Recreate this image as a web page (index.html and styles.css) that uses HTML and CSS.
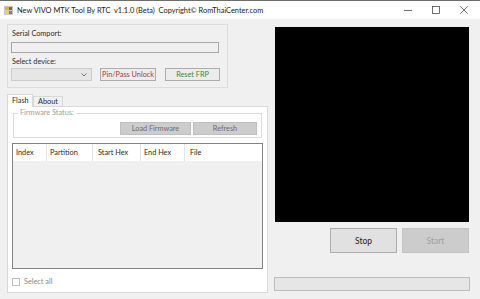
FILE: index.html
```html
<!DOCTYPE html>
<html lang="en">
<head>
    <meta charset="UTF-8">
    <title>New VIVO MTK Tool By RTC</title>
    <link rel="stylesheet" href="styles.css">
</head>
<body>
    <div class="window">
        <div class="titlebar">
            <svg class="app-icon" width="9" height="9" viewBox="0 0 9 9">
                <rect x="0" y="0" width="9" height="9" fill="#c8c8c8"/>
                <rect x="1" y="1" width="4" height="3" fill="#e8b030"/>
                <rect x="5" y="1" width="3" height="3" fill="#d04030"/>
                <rect x="1" y="5" width="4" height="3" fill="#f0d060"/>
                <rect x="5" y="5" width="3" height="3" fill="#7a7a9a"/>
            </svg>
            <span class="title">New VIVO MTK Tool By RTC&nbsp; v1.1.0 (Beta)&nbsp; Copyright© RomThaiCenter.com</span>
            <div class="controls">
                <svg viewBox="0 0 8 8"><path d="M0 4.5H8" stroke="#333" stroke-width="0.7"/></svg>
                <svg viewBox="0 0 8 8"><rect x="0.5" y="0.5" width="7" height="7" fill="none" stroke="#333" stroke-width="0.7"/></svg>
                <svg viewBox="0 0 8 8"><path d="M0.3 0.3L7.7 7.7M7.7 0.3L0.3 7.7" stroke="#333" stroke-width="0.7"/></svg>
            </div>
        </div>

        <div class="content">
            <div class="left">
                <div class="group-box">
                    <div class="label">Serial Comport:</div>
                    <div class="textbox"></div>
                    <div class="label label-device">Select device:</div>
                    <div class="device-row">
                        <div class="combo">
                            <svg width="6" height="4" viewBox="0 0 6 4"><path d="M0.5 0.5L3 3L5.5 0.5" fill="none" stroke="#555" stroke-width="0.8"/></svg>
                        </div>
                        <div class="btn btn-unlock">Pin/Pass Unlock</div>
                        <div class="btn btn-frp">Reset FRP</div>
                    </div>
                </div>

                <div class="tabs">
                    <div class="tab tab-active">Flash</div>
                    <div class="tab">About</div>
                </div>
                <div class="tab-page">
                    <div class="fw-group">
                        <span class="fw-legend">Firmware Status:</span>
                        <div class="btn btn-disabled btn-load">Load Firmware</div>
                        <div class="btn btn-disabled btn-refresh">Refresh</div>
                    </div>
                    <div class="listview">
                        <div class="list-header">
                            <div class="col col-index">Index</div>
                            <div class="col col-partition">Partition</div>
                            <div class="col col-start">Start Hex</div>
                            <div class="col col-end">End Hex</div>
                            <div class="col col-file">File</div>
                        </div>
                    </div>
                    <div class="select-all">
                        <span class="checkbox"></span>
                        <span>Select all</span>
                    </div>
                </div>
            </div>

            <div class="right">
                <div class="console"></div>
                <div class="action-row">
                    <div class="btn btn-big btn-stop">Stop</div>
                    <div class="btn btn-big btn-start">Start</div>
                </div>
                <div class="progress"></div>
            </div>
        </div>
    </div>
</body>
</html>
```

FILE: styles.css
```css
body {
    margin: 0;
    padding: 0;
    font-family: Lato, "Noto Sans", sans-serif;
    font-size: 7.3px;
    color: #2a2a2a;
}

.window {
    width: 480px;
    height: 299px;
    background-color: #f0f0f0;
    overflow: hidden;
}

.titlebar {
    height: 19px;
    box-sizing: border-box;
    border-top: 1px solid #6e6e6e;
    background-color: white;
    display: flex;
    align-items: center;
}

.app-icon {
    margin-left: 4px;
    margin-right: 4px;
}

.title {
    font-size: 7.4px;
    color: #1a1a1a;
    white-space: nowrap;
}

.controls {
    margin-left: auto;
    display: flex;
    gap: 20px;
    margin-right: 12px;
}

.controls svg {
    width: 8px;
    height: 8px;
}

.content {
    display: flex;
}

.left {
    width: 261px;
    margin-left: 7px;
}

.group-box {
    margin-top: 5px;
    width: 221px;
    height: 64px;
    box-sizing: border-box;
    border: 1px solid #dcdcdc;
    padding: 4px 0 0 3px;
}

.label {
    height: 10px;
    line-height: 10px;
    margin-left: 1px;
}

.label-device {
    margin-top: 4px;
}

.textbox {
    margin-top: 3px;
    width: 208px;
    height: 11px;
    box-sizing: border-box;
    border: 1px solid #a8a8a8;
    background-color: #f0f0f0;
}

.device-row {
    margin-top: 1px;
    display: flex;
    gap: 8px;
}

.combo {
    width: 81px;
    height: 13px;
    box-sizing: border-box;
    border: 1px solid #cccccc;
    background-color: #e6e6e6;
    display: flex;
    align-items: center;
    justify-content: flex-end;
    padding-right: 4px;
}

.btn {
    box-sizing: border-box;
    display: flex;
    align-items: center;
    justify-content: center;
    border: 1px solid #adadad;
    background-color: #e1e1e1;
    white-space: nowrap;
}

.btn-unlock {
    width: 56px;
    height: 13px;
    color: #a83a3a;
    background-color: #ececec;
}

.btn-frp {
    width: 55px;
    height: 13px;
    margin-left: 1px;
    color: #3a8a3a;
    background-color: #ececec;
}

.tabs {
    margin-top: 6px;
    display: flex;
    align-items: flex-end;
    height: 12px;
    position: relative;
    z-index: 1;
}

.tab {
    height: 10px;
    line-height: 10px;
    padding: 0 4px;
    box-sizing: border-box;
    border: 1px solid #d9d9d9;
    border-bottom: none;
    background-color: #f0f0f0;
}

.tab-active {
    width: 26px;
    height: 13px;
    line-height: 12px;
    background-color: white;
    margin-bottom: -1px;
}

.tab-page {
    width: 261px;
    height: 187px;
    box-sizing: border-box;
    border: 1px solid #d9d9d9;
    background-color: white;
    padding: 6px 4px 0 4px;
}

.fw-group {
    height: 25px;
    box-sizing: border-box;
    border: 1px solid #dcdcdc;
    margin: 0 1px 0 1px;
    display: flex;
    justify-content: flex-end;
    align-items: flex-start;
    gap: 2px;
    padding: 8px 4px 0 0;
    position: relative;
}

.fw-legend {
    position: absolute;
    top: -6px;
    left: 4px;
    padding: 0 2px;
    background-color: white;
    color: #a0a0a0;
}

.btn-disabled {
    background-color: #cccccc;
    border-color: #bfbfbf;
    color: #6d6d6d;
    height: 13px;
}

.btn-load {
    width: 71px;
}

.btn-refresh {
    width: 64px;
}

.listview {
    margin-top: 5px;
    height: 126px;
    box-sizing: border-box;
    border: 1px solid #828282;
    background-color: #f0f0f0;
}

.list-header {
    height: 17px;
    background-color: white;
    display: flex;
}

.col {
    box-sizing: border-box;
    border-right: 1px solid #e5e5e5;
    line-height: 17px;
    padding-left: 3px;
}

.col-index {
    width: 34px;
}

.col-partition {
    width: 46px;
}

.col-start {
    width: 48px;
    padding-left: 5px;
}

.col-end {
    width: 44px;
}

.col-file {
    flex: 1;
    border-right: none;
    padding-left: 5px;
}

.select-all {
    margin-top: 8px;
    display: flex;
    align-items: center;
    gap: 4px;
    color: #8a8a8a;
}

.checkbox {
    width: 8px;
    height: 8px;
    box-sizing: border-box;
    border: 1px solid #c0c0c0;
    background-color: white;
}

.right {
    width: 196px;
    margin-left: 6px;
    display: flex;
    flex-direction: column;
}

.console {
    margin: 8px 1px 0 1px;
    height: 195px;
    background-color: black;
}

.action-row {
    margin-top: 6px;
    display: flex;
    justify-content: flex-end;
    gap: 5px;
    margin-right: 1px;
}

.btn-big {
    width: 67px;
    height: 25px;
    font-size: 8.5px;
}

.btn-stop {
    color: #222;
}

.btn-start {
    background-color: #cccccc;
    border-color: #c4c4c4;
    color: #a0a0a0;
}

.progress {
    margin-top: 24px;
    height: 14px;
    box-sizing: border-box;
    border: 1px solid #bcbcbc;
    background-color: #e6e6e6;
}
```
